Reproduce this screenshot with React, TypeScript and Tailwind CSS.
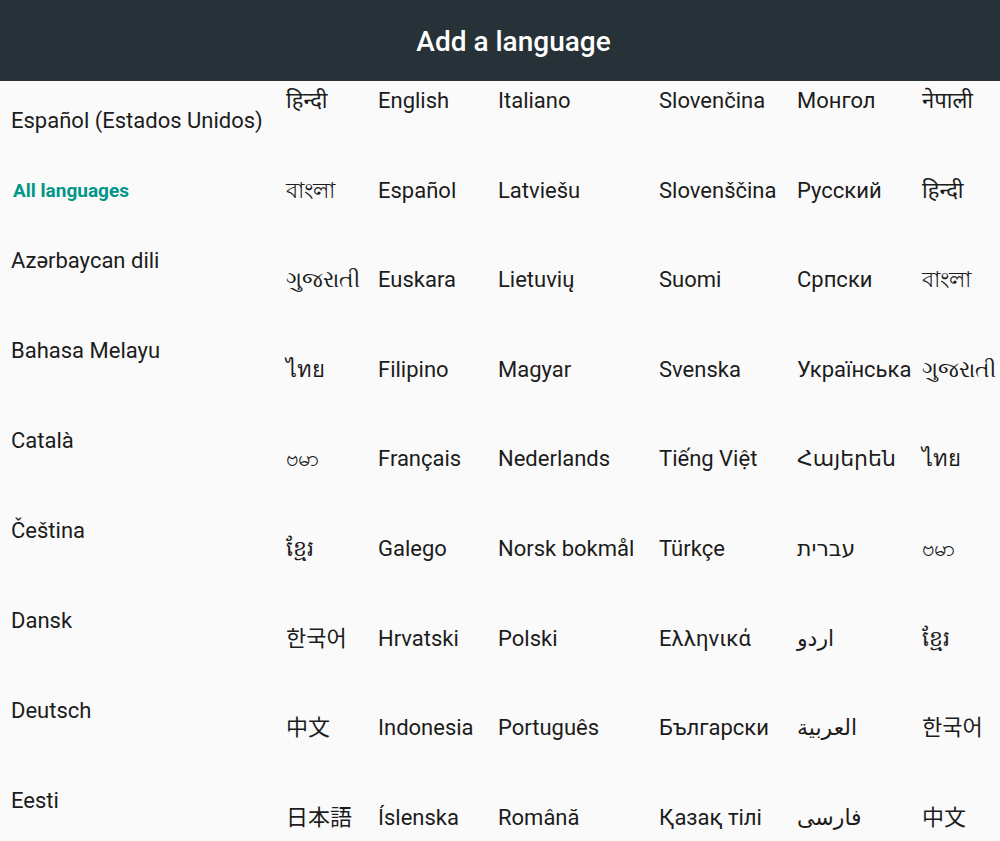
import React from "react";

const leftItems = [
  "Azərbaycan dili",
  "Bahasa Melayu",
  "Català",
  "Čeština",
  "Dansk",
  "Deutsch",
  "Eesti",
];

const columns: { width: string; items: string[] }[] = [
  {
    width: "w-[92px]",
    items: ["हिन्दी", "বাংলা", "ગુજરાતી", "ไทย", "ဗမာ", "ខ្មែរ", "한국어", "中文", "日本語"],
  },
  {
    width: "w-[120px]",
    items: ["English", "Español", "Euskara", "Filipino", "Français", "Galego", "Hrvatski", "Indonesia", "Íslenska"],
  },
  {
    width: "w-[161px]",
    items: ["Italiano", "Latviešu", "Lietuvių", "Magyar", "Nederlands", "Norsk bokmål", "Polski", "Português", "Română"],
  },
  {
    width: "w-[138px]",
    items: ["Slovenčina", "Slovenščina", "Suomi", "Svenska", "Tiếng Việt", "Türkçe", "Ελληνικά", "Български", "Қазақ тілі"],
  },
  {
    width: "w-[125px]",
    items: ["Монгол", "Русский", "Српски", "Українська", "Հայերեն", "עברית", "اردو", "العربية", "فارسی"],
  },
  {
    width: "w-[78px]",
    items: ["नेपाली", "हिन्दी", "বাংলা", "ગુજરાતી", "ไทย", "ဗမာ", "ខ្មែរ", "한국어", "中文"],
  },
];

export default function App() {
  return (
    <div className="h-screen w-full overflow-hidden bg-[#fafafa] font-['Roboto','Noto_Sans','DejaVu_Sans','Noto_Sans_CJK_KR',sans-serif] text-[#1c1c1c]">
      {/* Header */}
      <div className="h-[81px] bg-[#263238] flex items-center justify-center pl-[27px]">
        <h1 className="text-[28px] font-medium text-white pt-[2px]">Add a language</h1>
      </div>

      <div className="flex">
        {/* Left list */}
        <div className="w-[275px] shrink-0 pl-[11px] pt-[26px] flex flex-col">
          <div className="h-[70px] text-[22px] leading-[28px] whitespace-nowrap">Español (Estados Unidos)</div>
          <div className="h-[70px] pl-[2px] text-[19px] leading-[28px] font-bold text-[#009688]">All languages</div>
          {leftItems.map((name) => (
            <div key={name} className="h-[90px] text-[22px] leading-[28px] whitespace-nowrap">
              {name}
            </div>
          ))}
        </div>

        {/* Language columns */}
        <div className="flex pt-[6px] pl-[11px]">
          {columns.map((col, ci) => (
            <div key={ci} className={`${col.width} shrink-0 flex flex-col`}>
              {col.items.map((name, ri) => (
                <div key={ri} className="h-[89.6px] text-[22px] leading-[28px] whitespace-nowrap">
                  {name}
                </div>
              ))}
            </div>
          ))}
        </div>
      </div>
    </div>
  );
}
